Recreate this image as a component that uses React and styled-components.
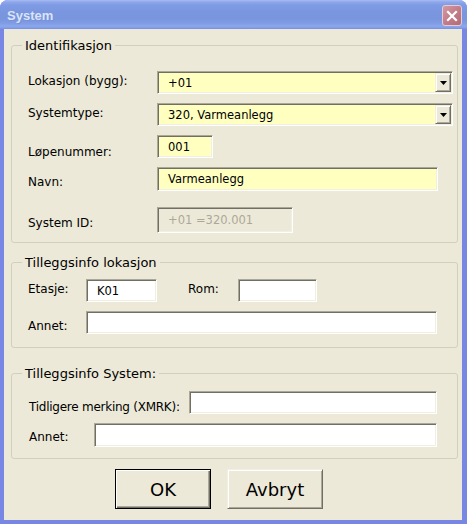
import React from "react";
import styled, { createGlobalStyle } from "styled-components";

const Global = createGlobalStyle`
  html, body { margin: 0; padding: 0; background: #ffffff; }
  #root { width: 467px; height: 524px; }
`;

const Window = styled.div`
  width: 467px;
  height: 524px;
  display: flex;
  flex-direction: column;
  background: #7787e3;
  border-radius: 8px 8px 0 0;
  overflow: hidden;
  box-sizing: border-box;
`;

const TitleBar = styled.div`
  height: 29px;
  flex: none;
  display: flex;
  align-items: flex-start;
  justify-content: space-between;
  padding: 0 5px 0 7px;
  box-sizing: border-box;
  background: linear-gradient(
    to bottom,
    #a9bdf2 0px,
    #8ea8ec 2px,
    #7f9be5 5px,
    #7a96df 12px,
    #7995de 19px,
    #7f9be4 23px,
    #8ba7ec 26px,
    #819de6 28px,
    #7787e3 29px
  );
`;

const Title = styled.span`
  font-family: "Liberation Sans", Arial, sans-serif;
  font-weight: bold;
  font-size: 13px;
  line-height: 31px;
  color: #d8e4f8;
  text-shadow: 1px 1px 0 #7a8fd8;
`;

const CloseButton = styled.div`
  margin-top: 5px;
  width: 20px;
  height: 21px;
  box-sizing: border-box;
  border: 1px solid #e6ccd4;
  border-radius: 3px;
  background: linear-gradient(135deg, #d29aa3 0%, #c27d8a 50%, #b46a78 100%);
  display: flex;
  align-items: center;
  justify-content: center;
`;

const Body = styled.div`
  flex: 1;
  margin: 0 5px 4px 4px;
  background: #ece9d8;
  padding: 0 4px 0 7px;
  display: flex;
  flex-direction: column;
`;

const Group = styled.fieldset`
  margin: ${(p) => p.$top}px 0 0 0;
  padding: 0;
  border: 1px solid #d0d0bf;
  border-radius: 3px;
  min-width: 0;
`;

const Legend = styled.legend`
  font-family: "DejaVu Sans", sans-serif;
  font-size: 13px;
  line-height: 15px;
  padding: 0 3px;
  margin-left: 10px;
  color: #000;
`;

const Content = styled.div`
  display: flex;
  flex-direction: column;
  gap: 9px;
  padding: ${(p) => p.$pt}px 4px ${(p) => p.$pb}px ${(p) => p.$pl || 16}px;
`;

const Row = styled.div`
  display: flex;
  align-items: center;
  height: ${(p) => p.$h || 23}px;
  margin-top: ${(p) => p.$extra || 0}px;
`;

const Label = styled.span`
  flex: none;
  width: ${(p) => p.$w}px;
  margin-left: ${(p) => p.$ml || 0}px;
  position: relative;
  top: ${(p) => p.$shift || 0}px;
  font-family: "DejaVu Sans", sans-serif;
  font-size: 12px;
  line-height: 14px;
  letter-spacing: ${(p) => p.$ls || 0}px;
  color: #000;
  white-space: nowrap;
`;

const sunken = `
  box-sizing: border-box;
  border: 1px solid;
  border-color: #aca899 #ffffff #ffffff #aca899;
  box-shadow: inset 1px 1px 0 #716f64, inset -1px -1px 0 #f1efe2;
`;

const Field = styled.div`
  ${sunken}
  flex: none;
  width: ${(p) => p.$w}px;
  height: 100%;
  background: ${(p) => (p.$disabled ? "#ece9d8" : p.$yellow ? "#ffffc0" : "#ffffff")};
  color: ${(p) => (p.$disabled ? "#aca899" : "#000")};
  font-family: "DejaVu Sans", sans-serif;
  font-size: 11.5px;
  display: flex;
  align-items: center;
  padding-left: 10px;
  white-space: nowrap;
`;

const Combo = styled.div`
  ${sunken}
  flex: none;
  width: ${(p) => p.$w}px;
  height: 100%;
  background: #ffffc0;
  padding: 1px;
  display: flex;
  align-items: stretch;
`;

const ComboText = styled.div`
  flex: 1;
  display: flex;
  align-items: center;
  padding-left: 9px;
  font-family: "DejaVu Sans", sans-serif;
  font-size: 11.5px;
  color: #000;
  white-space: nowrap;
`;

const raised = `
  box-sizing: border-box;
  border: 1px solid;
  border-color: #f1efe2 #716f64 #716f64 #f1efe2;
  box-shadow: inset 1px 1px 0 #ffffff, inset -1px -1px 0 #aca899;
  background: #ece9d8;
`;

const ArrowButton = styled.div`
  ${raised}
  width: 16px;
  flex: none;
  display: flex;
  align-items: center;
  justify-content: center;
`;

const ButtonRow = styled.div`
  display: flex;
  gap: 16px;
  margin-top: 10px;
  padding-left: 104px;
`;

const Button = styled.div`
  ${raised}
  width: 96px;
  height: 40px;
  display: flex;
  align-items: center;
  justify-content: center;
  font-family: "DejaVu Sans", sans-serif;
  font-size: 18px;
  color: #000;
  ${(p) =>
    p.$default &&
    `
    border: 1px solid #000;
    box-shadow: inset 1px 1px 0 #ffffff, inset -1px -1px 0 #716f64, inset -2px -2px 0 #aca899;
  `}
`;

const Arrow = () => (
  <svg width="7" height="4" viewBox="0 0 7 4">
    <polygon points="0,0 7,0 3.5,4" fill="#000" />
  </svg>
);

const CloseX = () => (
  <svg width="12" height="12" viewBox="0 0 12 12">
    <path d="M2 2 L10 10 M10 2 L2 10" stroke="#ffffff" strokeWidth="2.2" strokeLinecap="square" />
  </svg>
);

export default function App() {
  return (
    <>
      <Global />
      <Window>
        <TitleBar>
          <Title>System</Title>
          <CloseButton>
            <CloseX />
          </CloseButton>
        </TitleBar>
        <Body>
          <Group $top={9}>
            <Legend>Identifikasjon</Legend>
            <Content $pt={18} $pb={9}>
              <Row>
                <Label $w={129} $shift={-2}>Lokasjon (bygg):</Label>
                <Combo $w={296}>
                  <ComboText>+01</ComboText>
                  <ArrowButton>
                    <Arrow />
                  </ArrowButton>
                </Combo>
              </Row>
              <Row>
                <Label $w={129} $shift={-2}>Systemtype:</Label>
                <Combo $w={296}>
                  <ComboText>320, Varmeanlegg</ComboText>
                  <ArrowButton>
                    <Arrow />
                  </ArrowButton>
                </Combo>
              </Row>
              <Row>
                <Label $w={129} $shift={5}>Løpenummer:</Label>
                <Field $w={56} $yellow>001</Field>
              </Row>
              <Row $h={24}>
                <Label $w={129} $shift={3}>Navn:</Label>
                <Field $w={281} $yellow>Varmeanlegg</Field>
              </Row>
              <Row $h={26} $extra={7}>
                <Label $w={129} $shift={3}>System ID:</Label>
                <Field $w={136} $disabled>+01 =320.001</Field>
              </Row>
            </Content>
          </Group>

          <Group $top={12}>
            <Legend>Tilleggsinfo lokasjon</Legend>
            <Content $pt={9} $pb={13}>
              <Row>
                <Label $w={58} $shift={-2}>Etasje:</Label>
                <Field $w={71}>K01</Field>
                <Label $w={50} $ml={31} $shift={-2}>Rom:</Label>
                <Field $w={79} />
              </Row>
              <Row>
                <Label $w={58} $shift={3}>Annet:</Label>
                <Field $w={351} />
              </Row>
            </Content>
          </Group>

          <Group $top={18}>
            <Legend>Tilleggsinfo System:</Legend>
            <Content $pt={10} $pb={11} $pl={17}>
              <Row>
                <Label $w={160} $shift={4} $ls={-0.25}>Tidligere merking (XMRK):</Label>
                <Field $w={248} />
              </Row>
              <Row $h={24}>
                <Label $w={65} $shift={2}>Annet:</Label>
                <Field $w={343} />
              </Row>
            </Content>
          </Group>

          <ButtonRow>
            <Button $default>OK</Button>
            <Button>Avbryt</Button>
          </ButtonRow>
        </Body>
      </Window>
    </>
  );
}
